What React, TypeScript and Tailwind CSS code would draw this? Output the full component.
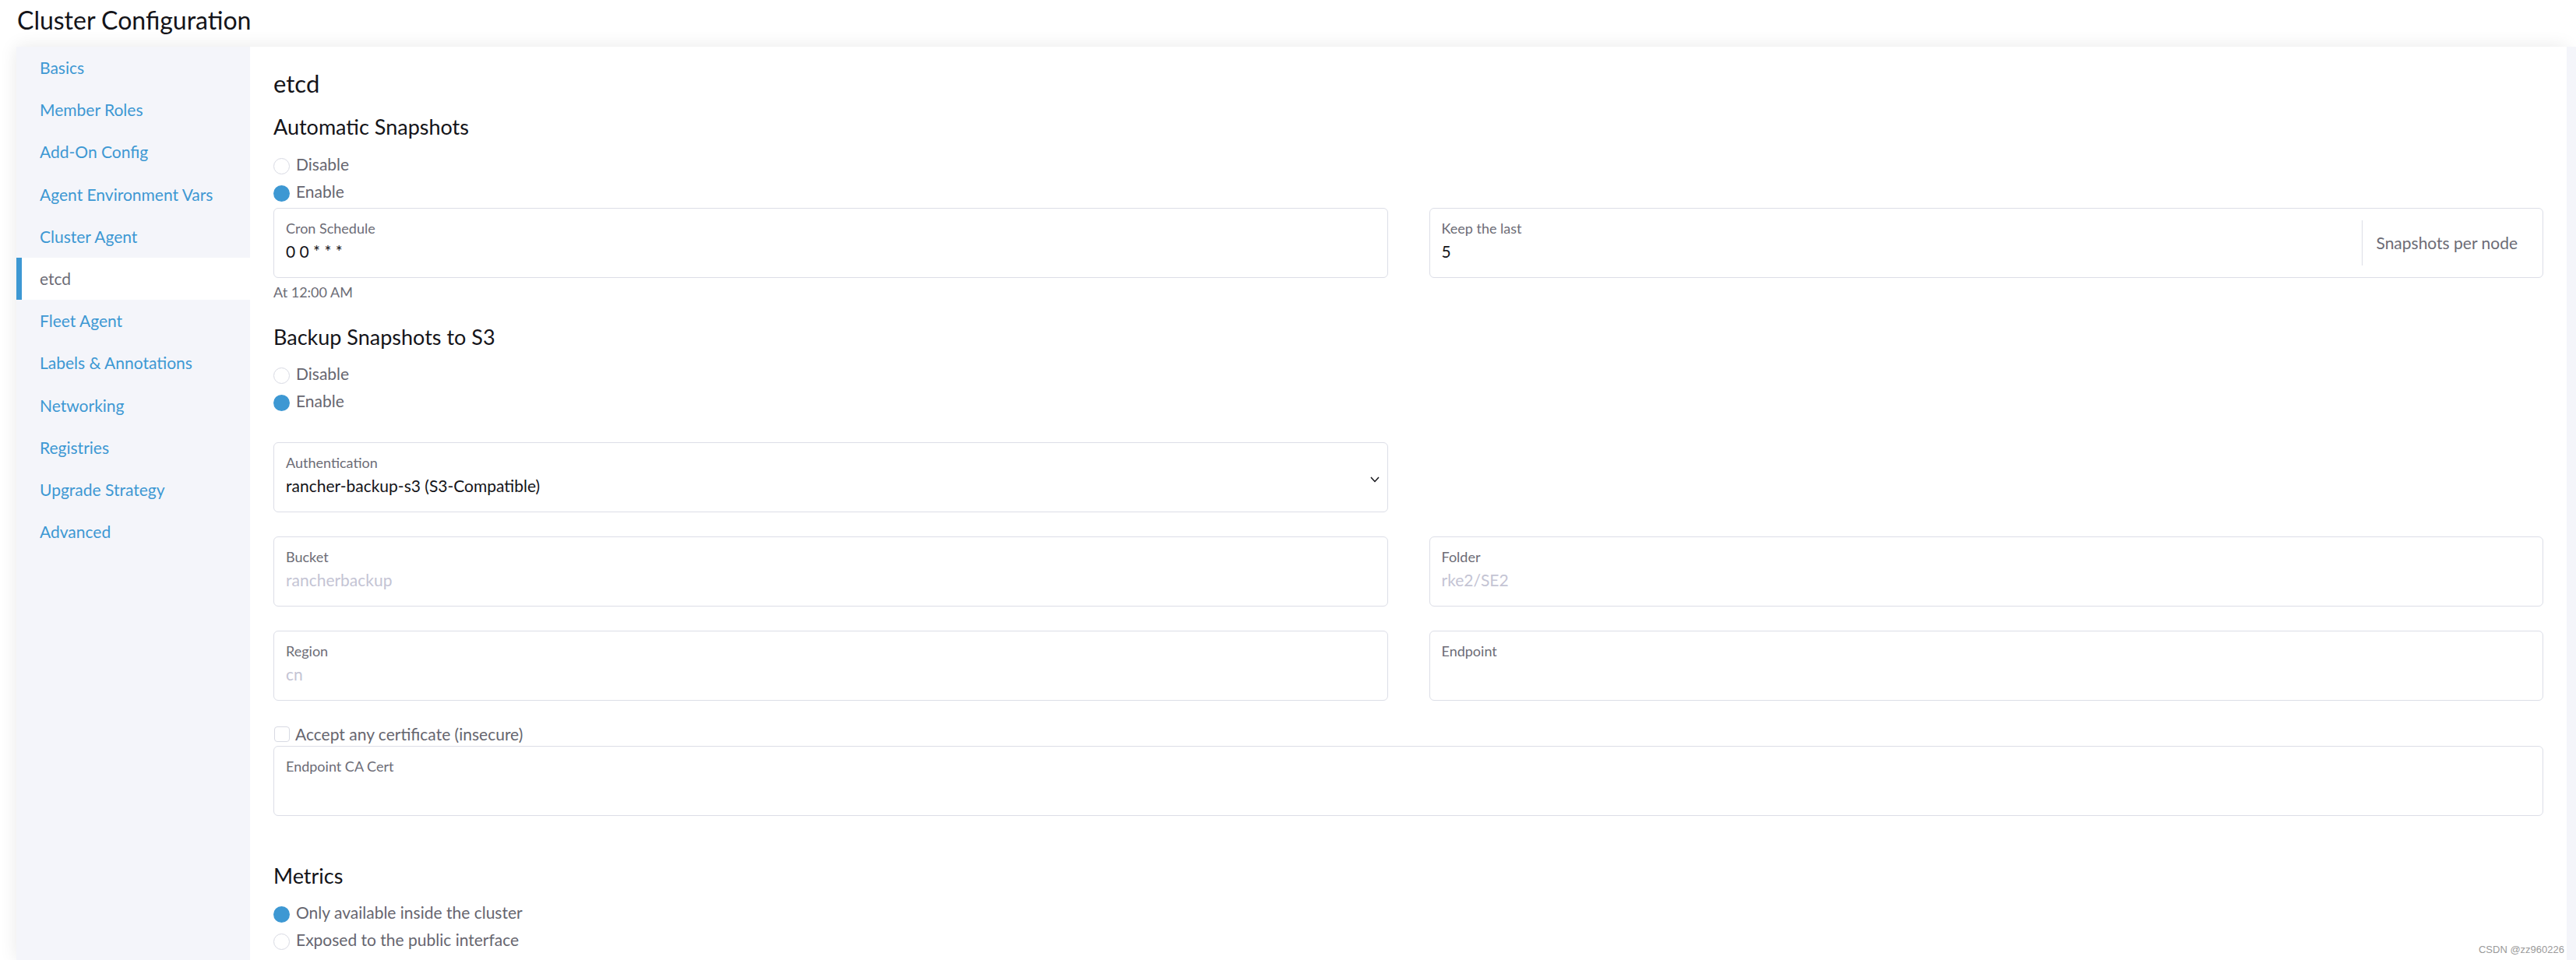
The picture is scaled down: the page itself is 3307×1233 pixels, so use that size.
import React from "react";

const navItems = [
  "Basics",
  "Member Roles",
  "Add-On Config",
  "Agent Environment Vars",
  "Cluster Agent",
  "etcd",
  "Fleet Agent",
  "Labels & Annotations",
  "Networking",
  "Registries",
  "Upgrade Strategy",
  "Advanced",
];

const Radio: React.FC<{ label: string; checked?: boolean }> = ({
  label,
  checked,
}) => (
  <div className="flex items-start h-[35px]">
    <span
      className={`mt-[10px] w-[21px] h-[21px] rounded-full shrink-0 ${
        checked
          ? "bg-[#3d98d3]"
          : "bg-white border-[1.5px] border-[#d8dae3]"
      }`}
    />
    <span className="ml-[8px] text-[21px] leading-[35px] text-[#66666f]">
      {label}
    </span>
  </div>
);

interface FieldProps {
  label: string;
  value?: string;
  placeholder?: string;
  className?: string;
}

const Field: React.FC<FieldProps> = ({ label, value, placeholder, className }) => (
  <div
    className={`h-[90px] border border-[#dcdee7] rounded-[6px] px-[15px] pt-[14px] bg-white ${
      className ?? ""
    }`}
  >
    <div className="text-[18px] leading-[22px] text-[#6c6c76]">{label}</div>
    <div
      className={`mt-[5px] text-[21px] leading-[28px] h-[28px] ${
        value ? "text-[#141419]" : "text-[#c4c4d4]"
      }`}
    >
      {value ?? placeholder}
    </div>
  </div>
);

const SectionTitle: React.FC<{ children: React.ReactNode; className?: string }> = ({
  children,
  className,
}) => (
  <h3 className={`text-[27px] leading-[34px] text-[#141419] ${className ?? ""}`}>
    {children}
  </h3>
);

export default function App() {
  return (
    <div className="relative w-[3307px] h-[1233px] overflow-hidden bg-white [font-family:Lato,'Noto_Sans',sans-serif] text-[#141419]">
      {/* page title */}
      <div className="h-[60px] pl-[22px] pt-[6px]">
        <h1 className="text-[32px] leading-[40px] text-[#141419]">
          Cluster Configuration
        </h1>
      </div>

      <div className="flex h-[1173px] pl-[21px]">
        <div className="flex flex-1 shadow-[0_0_22px_rgba(0,0,0,0.09)]">
          {/* side nav */}
          <nav className="w-[300px] shrink-0 bg-[#f4f5fa]">
            {navItems.map((item) =>
              item === "etcd" ? (
                <div
                  key={item}
                  className="h-[54.2px] bg-white border-l-[7px] border-[#3d98d3] pl-[23px] text-[21px] leading-[54px] text-[#6c6c76]"
                >
                  {item}
                </div>
              ) : (
                <div
                  key={item}
                  className="h-[54.2px] pl-[30px] text-[21px] leading-[54px] text-[#3d98d3]"
                >
                  {item}
                </div>
              )
            )}
          </nav>

          {/* main content */}
          <div className="flex-1 bg-white px-[30px]">
            <h2 className="mt-[27px] text-[31px] leading-[40px] text-[#141419]">etcd</h2>

            <SectionTitle className="mt-[19px]">Automatic Snapshots</SectionTitle>
            <div className="mt-[13px]">
              <Radio label="Disable" />
              <Radio label="Enable" checked />
            </div>

            <div className="mt-[4px] grid grid-cols-2 gap-x-[53px]">
              <div>
                <Field label="Cron Schedule" value="0 0 * * *" />
                <div className="mt-[6px] text-[18px] leading-[24px] text-[#6c6c76]">
                  At 12:00 AM
                </div>
              </div>
              <div className="h-[90px] border border-[#dcdee7] rounded-[6px] flex bg-white">
                <div className="flex-1 px-[15px] pt-[14px]">
                  <div className="text-[18px] leading-[22px] text-[#6c6c76]">
                    Keep the last
                  </div>
                  <div className="mt-[5px] text-[21px] leading-[28px] text-[#141419]">5</div>
                </div>
                <div className="my-[15px] border-l border-[#dcdee7] pl-[17px] pr-[32px] flex items-center text-[21px] text-[#6c6c76]">
                  Snapshots per node
                </div>
              </div>
            </div>

            <SectionTitle className="mt-[29px]">Backup Snapshots to S3</SectionTitle>
            <div className="mt-[12px]">
              <Radio label="Disable" />
              <Radio label="Enable" checked />
            </div>

            <div className="mt-[36px] grid grid-cols-2 gap-x-[53px]">
              <div className="h-[90px] border border-[#dcdee7] rounded-[6px] flex items-center bg-white">
                <div className="flex-1 h-full px-[15px] pt-[14px]">
                  <div className="text-[18px] leading-[22px] text-[#6c6c76]">
                    Authentication
                  </div>
                  <div className="mt-[5px] text-[21px] leading-[28px] text-[#141419]">
                    rancher-backup-s3 (S3-Compatible)
                  </div>
                </div>
                <svg
                  width="12"
                  height="8"
                  viewBox="0 0 12 8"
                  className="mr-[10px] mt-[6px] shrink-0"
                  fill="none"
                  stroke="#141419"
                  strokeWidth="1.5"
                >
                  <polyline points="1,1 6,6.5 11,1" />
                </svg>
              </div>
              <div />
            </div>

            <div className="mt-[31px] grid grid-cols-2 gap-x-[53px]">
              <Field label="Bucket" placeholder="rancherbackup" />
              <Field label="Folder" placeholder="rke2/SE2" />
            </div>

            <div className="mt-[31px] grid grid-cols-2 gap-x-[53px]">
              <Field label="Region" placeholder="cn" />
              <Field label="Endpoint" placeholder="" />
            </div>

            <div className="mt-[27px] flex items-start h-[31px]">
              <span className="mt-[6px] ml-[1px] w-[20px] h-[20px] rounded-[4px] border-[1.5px] border-[#d8dae3] bg-white shrink-0" />
              <span className="ml-[7px] text-[21px] leading-[31px] text-[#66666f]">
                Accept any certificate (insecure)
              </span>
            </div>
            <Field label="Endpoint CA Cert" placeholder="" />

            <SectionTitle className="mt-[60px]">Metrics</SectionTitle>
            <div className="mt-[12px]">
              <Radio label="Only available inside the cluster" checked />
              <Radio label="Exposed to the public interface" />
            </div>
          </div>
        </div>
        <div className="w-[12px] shrink-0 bg-[#f4f5fa]" />
      </div>

      <div className="absolute right-[15px] bottom-[6px] text-[13px] leading-[15px] text-[#9a9a9a] [font-family:'Liberation_Sans',Arial,sans-serif]">
        CSDN @zz960226
      </div>
    </div>
  );
}
